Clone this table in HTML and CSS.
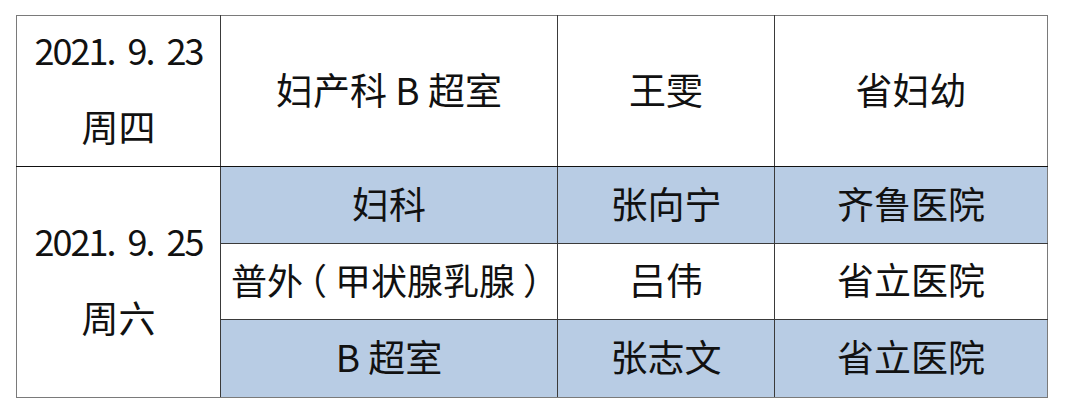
FILE: index.html
```html
<!DOCTYPE html>
<html lang="zh-CN">
<head>
<meta charset="utf-8">
<link rel="stylesheet" href="styles.css">
</head>
<body>
<table class="sched">
  <colgroup>
    <col class="c-date">
    <col class="c-dept">
    <col class="c-name">
    <col class="c-hosp">
  </colgroup>
  <tr class="r-big">
    <td class="date"><span class="num">2021<span class="dot">.</span>9<span class="dot">.</span>23</span><span class="day">周四</span></td>
    <td>妇产科 B 超室</td>
    <td>王雯</td>
    <td>省妇幼</td>
  </tr>
  <tr class="r1 blue">
    <td class="date white" rowspan="3"><span class="num">2021<span class="dot">.</span>9<span class="dot">.</span>25</span><span class="day">周六</span></td>
    <td>妇科</td>
    <td>张向宁</td>
    <td>齐鲁医院</td>
  </tr>
  <tr class="r2">
    <td class="long">普外<span class="pl">（</span>甲状腺乳腺<span class="pr">）</span></td>
    <td>吕伟</td>
    <td>省立医院</td>
  </tr>
  <tr class="r3 blue">
    <td>B 超室</td>
    <td>张志文</td>
    <td>省立医院</td>
  </tr>
</table>
</body>
</html>
```
FILE: styles.css
```css
html, body {
  margin: 0;
  background: #ffffff;
}
body {
  padding: 15px 0 0 16px;
  font-family: "Noto Sans CJK SC", "Noto Sans", sans-serif;
  color: #111;
}
.sched {
  border-collapse: collapse;
  table-layout: fixed;
  width: 1031px;
  border: 1px solid #7a7a7a;
}
.c-date { width: 204px; }
.c-dept { width: 337px; }
.c-name { width: 217px; }
.c-hosp { width: 273px; }
.sched td {
  border: 1px solid #3a3a3a;
  text-align: center;
  vertical-align: middle;
  font-size: 37px;
  line-height: 40px;
  padding: 0 0 5px 0;
  white-space: nowrap;
}
.sched td.long { font-size: 36px; }
.pl, .pr { font-feature-settings: "halt" 1; }
.pl { margin-left: 6px; margin-right: 8px; }
.pr { margin-left: 8px; margin-right: 6px; }
.sched tr:first-child td { border-top: 1px solid #7a7a7a; }
.sched td:last-child { border-right: 1px solid #7a7a7a; }
.sched td.date {
  border-left: 1px solid #7a7a7a;
  border-bottom: 1px solid #7a7a7a;
  padding-bottom: 8px;
}
.sched tr.r3 td { border-bottom: 1px solid #7a7a7a; }
.sched tr.r-big td { border-bottom: 1px solid #111; }
.r-big { height: 151px; }
.r1 { height: 77px; }
.r2 { height: 76px; }
.r3 { height: 78px; }
.blue td { background: #b8cce4; }
.blue td.white { background: #ffffff; }
.num {
  display: block;
  letter-spacing: -2px;
  font-size: 36px;
  margin-bottom: 37px;
}
.dot { margin-right: 13px; }
.day { display: block; }
```
